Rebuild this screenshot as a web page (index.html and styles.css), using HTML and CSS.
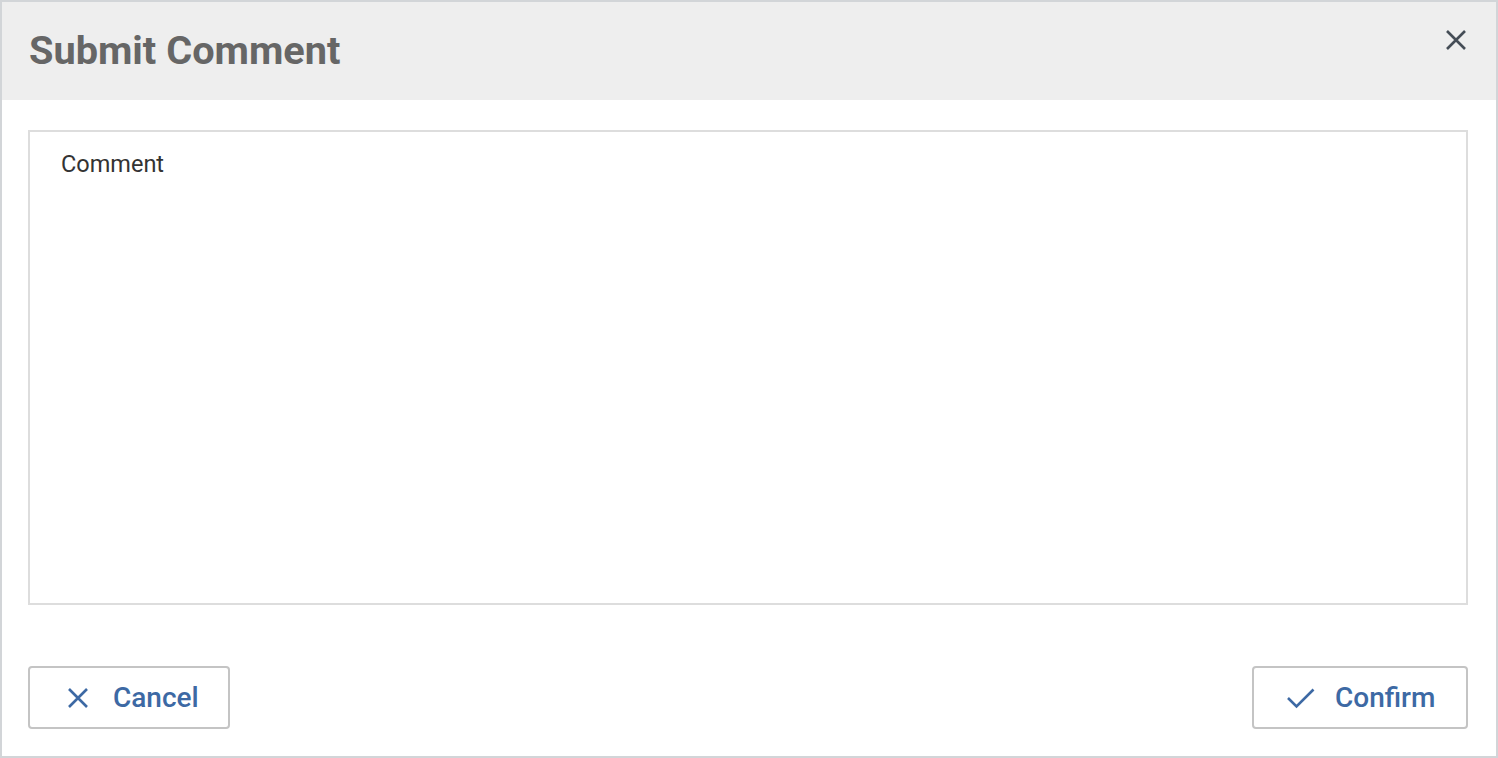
FILE: index.html
```html
<!DOCTYPE html>
<html lang="en">
<head>
<meta charset="utf-8">
<title>Submit Comment</title>
<link rel="stylesheet" href="styles.css">
</head>
<body>
<div class="dialog">
  <header class="dialog-header">
    <h1 class="dialog-title">Submit Comment</h1>
    <button class="close-btn" aria-label="Close">
      <svg width="20" height="20" viewBox="0 0 20 20"><path d="M1 1 L19 19 M19 1 L1 19" stroke="#454d56" stroke-width="2.6" fill="none" stroke-linecap="butt"/></svg>
    </button>
  </header>
  <main class="dialog-body">
    <textarea class="comment-input" placeholder="Comment"></textarea>
  </main>
  <footer class="dialog-footer">
    <button class="btn btn-cancel">
      <svg class="btn-icon" width="22" height="22" viewBox="0 0 22 22"><path d="M2 2 L20 20 M20 2 L2 20" stroke="#3d69a4" stroke-width="2.6" fill="none"/></svg>
      <span>Cancel</span>
    </button>
    <button class="btn btn-confirm">
      <svg class="btn-icon" width="28" height="22" viewBox="0 0 28 22"><path d="M1 11 L9.5 19.5 L26.5 2.5" stroke="#3d69a4" stroke-width="2.6" fill="none"/></svg>
      <span>Confirm</span>
    </button>
  </footer>
</div>
</body>
</html>
```

FILE: styles.css
```css
* { box-sizing: border-box; }
html, body { margin: 0; padding: 0; height: 100%; }
body { font-family: Roboto, "Liberation Sans", sans-serif; background: #fff; }

.dialog {
  height: 758px;
  border: 2px solid #d2d5d8;
  display: flex;
  flex-direction: column;
  background: #fff;
}

.dialog-header {
  height: 98px;
  background: #eeeeee;
  display: flex;
  align-items: flex-start;
  justify-content: space-between;
  padding: 0 28px 0 27px;
}

.dialog-title {
  margin: 0;
  padding-top: 25px;
  font-size: 39.7px;
  line-height: 47px;
  font-weight: 700;
  color: #666666;
}

.close-btn {
  margin-top: 26px;
  padding: 0;
  border: 0;
  background: transparent;
  width: 24px;
  height: 24px;
  display: flex;
  align-items: center;
  justify-content: center;
}

.dialog-body {
  padding: 30px 28px 0 26px;
}

.comment-input {
  display: block;
  width: 100%;
  height: 475px;
  border: 2px solid #dddddd;
  padding: 18px 31px;
  font-family: Roboto, "Liberation Sans", sans-serif;
  font-size: 23.5px;
  color: #333;
  resize: none;
  outline: none;
}
.comment-input::placeholder { color: #333333; opacity: 1; }

.dialog-footer {
  display: flex;
  justify-content: space-between;
  padding: 61px 28px 0 26px;
}

.btn {
  height: 63px;
  border: 2px solid #c4c4c4;
  border-radius: 4px;
  background: #fff;
  display: flex;
  align-items: center;
  gap: 24px;
  font-family: Roboto, "Liberation Sans", sans-serif;
  font-size: 28px;
  font-weight: 500;
  color: #3d69a4;
  cursor: pointer;
}

.btn-cancel { width: 202px; padding: 0 0 0 37px; }
.btn-confirm { width: 216px; padding: 0 0 0 33px; gap: 20px; }
.btn-icon { flex: none; }
```
